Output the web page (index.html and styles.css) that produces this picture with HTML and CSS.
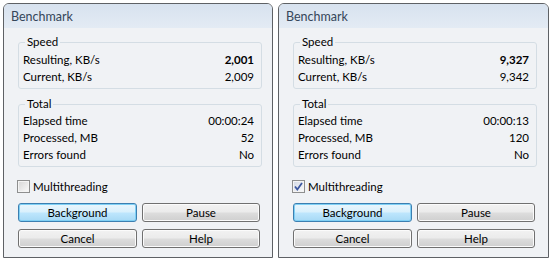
FILE: index.html
```html
<!DOCTYPE html>
<html>
<head>
<meta charset="utf-8">
<title>Benchmark</title>
<link rel="stylesheet" href="styles.css">
</head>
<body>
<div class="screen">
  <div class="window">
    <div class="titlebar">Benchmark</div>
    <div class="client">
      <fieldset class="group speed">
        <legend>Speed</legend>
        <div class="row"><span>Resulting, KB/s</span><b>2,001</b></div>
        <div class="row"><span>Current, KB/s</span><span>2,009</span></div>
      </fieldset>
      <fieldset class="group total">
        <legend>Total</legend>
        <div class="row"><span>Elapsed time</span><span>00:00:24</span></div>
        <div class="row"><span>Processed, MB</span><span>52</span></div>
        <div class="row"><span>Errors found</span><span>No</span></div>
      </fieldset>
      <div class="check"><span class="box"></span><span>Multithreading</span></div>
      <div class="buttons">
        <button class="btn default">Background</button>
        <button class="btn">Pause</button>
        <button class="btn">Cancel</button>
        <button class="btn">Help</button>
      </div>
    </div>
  </div>
  <div class="window">
    <div class="titlebar">Benchmark</div>
    <div class="client">
      <fieldset class="group speed">
        <legend>Speed</legend>
        <div class="row"><span>Resulting, KB/s</span><b>9,327</b></div>
        <div class="row"><span>Current, KB/s</span><span>9,342</span></div>
      </fieldset>
      <fieldset class="group total">
        <legend>Total</legend>
        <div class="row"><span>Elapsed time</span><span>00:00:13</span></div>
        <div class="row"><span>Processed, MB</span><span>120</span></div>
        <div class="row"><span>Errors found</span><span>No</span></div>
      </fieldset>
      <div class="check"><span class="box checked"><svg width="9" height="9" viewBox="0 0 9 9"><path d="M1 4.5 L3.3 7.5 L8 1" fill="none" stroke="#3d58a0" stroke-width="1.8"/></svg></span><span>Multithreading</span></div>
      <div class="buttons">
        <button class="btn default">Background</button>
        <button class="btn">Pause</button>
        <button class="btn">Cancel</button>
        <button class="btn">Help</button>
      </div>
    </div>
  </div>
</div>
</body>
</html>
```

FILE: styles.css
```css
html, body {
  margin: 0;
  padding: 0;
  background: #ffffff;
}
body {
  font-family: Lato, "Open Sans", "Liberation Sans", sans-serif;
  font-size: 11.5px;
  color: #000000;
}
.screen {
  display: flex;
  gap: 5px;
  padding: 3px 0 0 3px;
}
.window {
  box-sizing: border-box;
  width: 270px;
  height: 255px;
  border: 1px solid #5e6165;
  border-radius: 6px 6px 0 0;
  background: #f0f2f5;
  display: flex;
  flex-direction: column;
  overflow: hidden;
}
.window + .window {
  width: 271px;
}
.titlebar {
  height: 24px;
  line-height: 25px;
  padding-left: 7px;
  font-size: 12.5px;
  color: #35465a;
  background: linear-gradient(#d7e2ef, #e3ebf4);
}
.client {
  flex: 1;
  padding: 7px 11px 0 14px;
  display: flex;
  flex-direction: column;
}
.group {
  margin: 0;
  padding: 2px 7px 3px 4px;
  border: 1px solid #d4dde4;
  border-radius: 3px;
  width: 244px;
  box-sizing: border-box;
  min-width: 0;
}
.group legend {
  padding: 0 2px;
  margin-left: 2px;
  line-height: 14px;
}
.total {
  margin-top: 8px;
  padding-top: 1px;
}
.row {
  display: flex;
  justify-content: space-between;
  line-height: 17px;
}
.row b {
  font-weight: 700;
}
.check {
  display: flex;
  align-items: center;
  gap: 3px;
  margin: 13px 0 0 -1px;
  height: 13px;
}
.box {
  box-sizing: border-box;
  width: 13px;
  height: 13px;
  border: 1px solid #8e8f8f;
  background: linear-gradient(135deg, #d6d6d6, #fbfbfb);
  box-shadow: inset 0 0 0 1px #f4f4f4;
  display: flex;
  align-items: center;
  justify-content: center;
}
.box.checked {
  background: linear-gradient(135deg, #d2d8e4, #fbfbfb);
}
.buttons {
  display: grid;
  grid-template-columns: 119px 118px;
  column-gap: 5px;
  row-gap: 7px;
  margin-top: 10px;
}
.btn {
  box-sizing: border-box;
  height: 19px;
  padding: 0;
  font: inherit;
  color: #000;
  border: 1px solid #707070;
  border-radius: 3px;
  background: linear-gradient(#f2f2f2 0%, #ebebeb 48%, #dddddd 52%, #cfcfcf 100%);
  box-shadow: inset 0 0 0 1px #fbfbfb;
}
.btn.default {
  border-color: #3c7fb1;
  background: linear-gradient(#eaf6fd 0%, #d9f0fc 48%, #bee6fd 52%, #a7d9f5 100%);
  box-shadow: inset 0 0 0 1px #7fd0f5;
}
```
